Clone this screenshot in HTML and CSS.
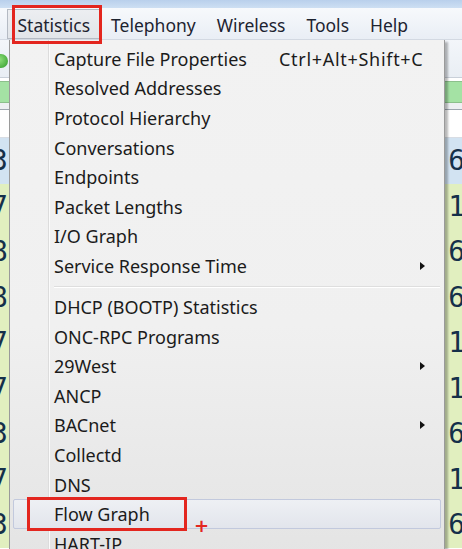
FILE: index.html
```html
<!DOCTYPE html>
<html lang="en">
<head>
<meta charset="utf-8">
<title>Statistics menu</title>
<link rel="stylesheet" href="styles.css">
</head>
<body>
<div class="window">
  <div class="titlebar"></div>
  <nav class="menubar">
    <span class="menubar-item is-open">Statistics</span>
    <span class="menubar-item">Telephony</span>
    <span class="menubar-item">Wireless</span>
    <span class="menubar-item">Tools</span>
    <span class="menubar-item">Help</span>
  </nav>
  <div class="workspace">
    <div class="toolbar"><span class="go-icon"></span></div>
    <div class="filterbar"></div>
    <div class="list-header"></div>
    <div class="packet-list">
      <div class="packet-row is-blue"><span class="num-l">3</span><span class="num-r">6</span></div>
      <div class="packet-row"><span class="num-l">7</span><span class="num-r">1</span></div>
      <div class="packet-row"><span class="num-l">8</span><span class="num-r">6</span></div>
      <div class="packet-row"><span class="num-l">8</span><span class="num-r">6</span></div>
      <div class="packet-row"><span class="num-l">7</span><span class="num-r">1</span></div>
      <div class="packet-row"><span class="num-l">7</span><span class="num-r">1</span></div>
      <div class="packet-row"><span class="num-l">3</span><span class="num-r">6</span></div>
      <div class="packet-row"><span class="num-l">7</span><span class="num-r">1</span></div>
      <div class="packet-row"><span class="num-l">3</span><span class="num-r">6</span></div>
    </div>

    <div class="dropdown">
      <div class="item"><span class="label">Capture File Properties</span><span class="shortcut">Ctrl+Alt+Shift+C</span></div>
      <div class="item"><span class="label">Resolved Addresses</span></div>
      <div class="item"><span class="label">Protocol Hierarchy</span></div>
      <div class="item"><span class="label">Conversations</span></div>
      <div class="item"><span class="label">Endpoints</span></div>
      <div class="item"><span class="label">Packet Lengths</span></div>
      <div class="item"><span class="label">I/O Graph</span></div>
      <div class="item"><span class="label">Service Response Time</span><span class="arrow"></span></div>
      <div class="separator"></div>
      <div class="item"><span class="label">DHCP (BOOTP) Statistics</span></div>
      <div class="item"><span class="label">ONC-RPC Programs</span></div>
      <div class="item"><span class="label">29West</span><span class="arrow"></span></div>
      <div class="item"><span class="label">ANCP</span></div>
      <div class="item"><span class="label">BACnet</span><span class="arrow"></span></div>
      <div class="item"><span class="label">Collectd</span></div>
      <div class="item"><span class="label">DNS</span></div>
      <div class="item is-hover"><span class="label">Flow Graph</span></div>
      <div class="item"><span class="label">HART-IP</span></div>
    </div>

    <div class="mark mark-flow"></div>
    <span class="mark-plus">+</span>
  </div>
  <div class="mark mark-stats"></div>
</div>
</body>
</html>
```

FILE: styles.css
```css
* { box-sizing: border-box; }

html, body {
  margin: 0;
  padding: 0;
  background: #ffffff;
}

body {
  width: 462px;
  height: 549px;
  overflow: hidden;
  font-family: "Noto Sans", "Open Sans", sans-serif;
  color: #1b1b1b;
}

.window {
  position: relative;
  width: 462px;
  height: 549px;
  overflow: hidden;
}

.titlebar {
  height: 8px;
  background: linear-gradient(#b9d0ec, #cddff3);
}

.menubar {
  height: 32px;
  display: flex;
  align-items: stretch;
  padding-left: 7px;
  background: linear-gradient(#f7f9fc, #e9eef5);
  border-bottom: 1px solid #d3d9e2;
}

.menubar-item {
  display: flex;
  align-items: center;
  padding: 3px 9.5px 0;
  font-size: 17.5px;
  color: #1d2330;
  border: 1px solid transparent;
}

.menubar-item.is-open {
  background: linear-gradient(#eceef1, #e2e5e9);
  border-color: #b4bac3;
  margin-top: 1px;
  padding-top: 2px;
}

.workspace {
  position: relative;
  height: 509px;
}

.toolbar {
  height: 38px;
  display: flex;
  align-items: center;
  background: linear-gradient(#f3f6fa, #e9eef4);
  border-bottom: 1px solid #c9d0d9;
}

.go-icon {
  width: 14px;
  height: 14px;
  margin-left: -6px;
  margin-top: 4px;
  border-radius: 50%;
  background: radial-gradient(circle at 40% 40%, #8fe07a, #2f9a2a);
}

.filterbar {
  height: 22px;
  margin: 3px 0 0;
  background: #a4e2a4;
  border-top: 1px solid #8cc08c;
  border-bottom: 1px solid #8cc08c;
}

.list-header {
  height: 35px;
  background: linear-gradient(#eef0f3 0, #eef0f3 6px, #9ea6b0 6px, #9ea6b0 7px, #ffffff 7px);
  border-bottom: 1px solid #d8dde4;
}

.packet-list {
  display: flex;
  flex-direction: column;
}

.packet-row {
  height: 45.5px;
  display: flex;
  align-items: center;
  justify-content: space-between;
  background: #e1efbf;
  font-family: "DejaVu Sans Mono", "Liberation Mono", monospace;
  font-size: 28px;
  color: #15304a;
}

.packet-row.is-blue {
  background: #d2e3f2;
}

.num-l { margin-left: -9px; }
.num-r { margin-right: -3px; }

.dropdown {
  position: absolute;
  left: 9px;
  top: 0;
  width: 436px;
  height: 520px;
  padding-top: 4px;
  border: 1px solid #9a9a9a;
  border-top: none;
  box-shadow: 3px 2px 2px rgba(0, 0, 0, 0.28);
  background:
    linear-gradient(to right, transparent 38px, #dcdcdc 38px, #dcdcdc 39px, #fbfbfb 39px, #fbfbfb 40px, transparent 40px),
    linear-gradient(#f2f2f2 0, #f0f0f0 55%, #e4e4e4 100%);
}

.item {
  height: 29.6px;
  margin: 0 3px;
  padding-left: 40px;
  display: grid;
  grid-template-columns: 225px 1fr 20px;
  align-items: center;
  font-size: 18px;
  border: 1px solid transparent;
  border-radius: 2px;
  white-space: nowrap;
}

.item .label { grid-column: 1; }
.item .shortcut {
  grid-column: 2 / 4;
  letter-spacing: 0.7px;
}
.item .arrow {
  grid-column: 3;
  justify-self: start;
  width: 0;
  height: 0;
  border-left: 5px solid #111;
  border-top: 4px solid transparent;
  border-bottom: 4px solid transparent;
}

.item.is-hover {
  background: linear-gradient(#eef0f4, #e2e5ec);
  border-color: #c2c9dd;
}

.separator {
  height: 2px;
  margin: 5px 4px 4.4px 44px;
  background: linear-gradient(#dedede 0, #dedede 1px, #ffffff 1px);
}

.mark {
  position: absolute;
  border: 3px solid #e3261f;
}

.mark-stats {
  left: 12px;
  top: 5px;
  width: 90px;
  height: 39px;
}

.mark-flow {
  left: 27px;
  top: 457px;
  width: 160px;
  height: 34px;
}

.mark-plus {
  position: absolute;
  left: 194px;
  top: 475px;
  font-family: "DejaVu Sans", sans-serif;
  font-size: 18px;
  font-weight: bold;
  color: #e3261f;
}
```
